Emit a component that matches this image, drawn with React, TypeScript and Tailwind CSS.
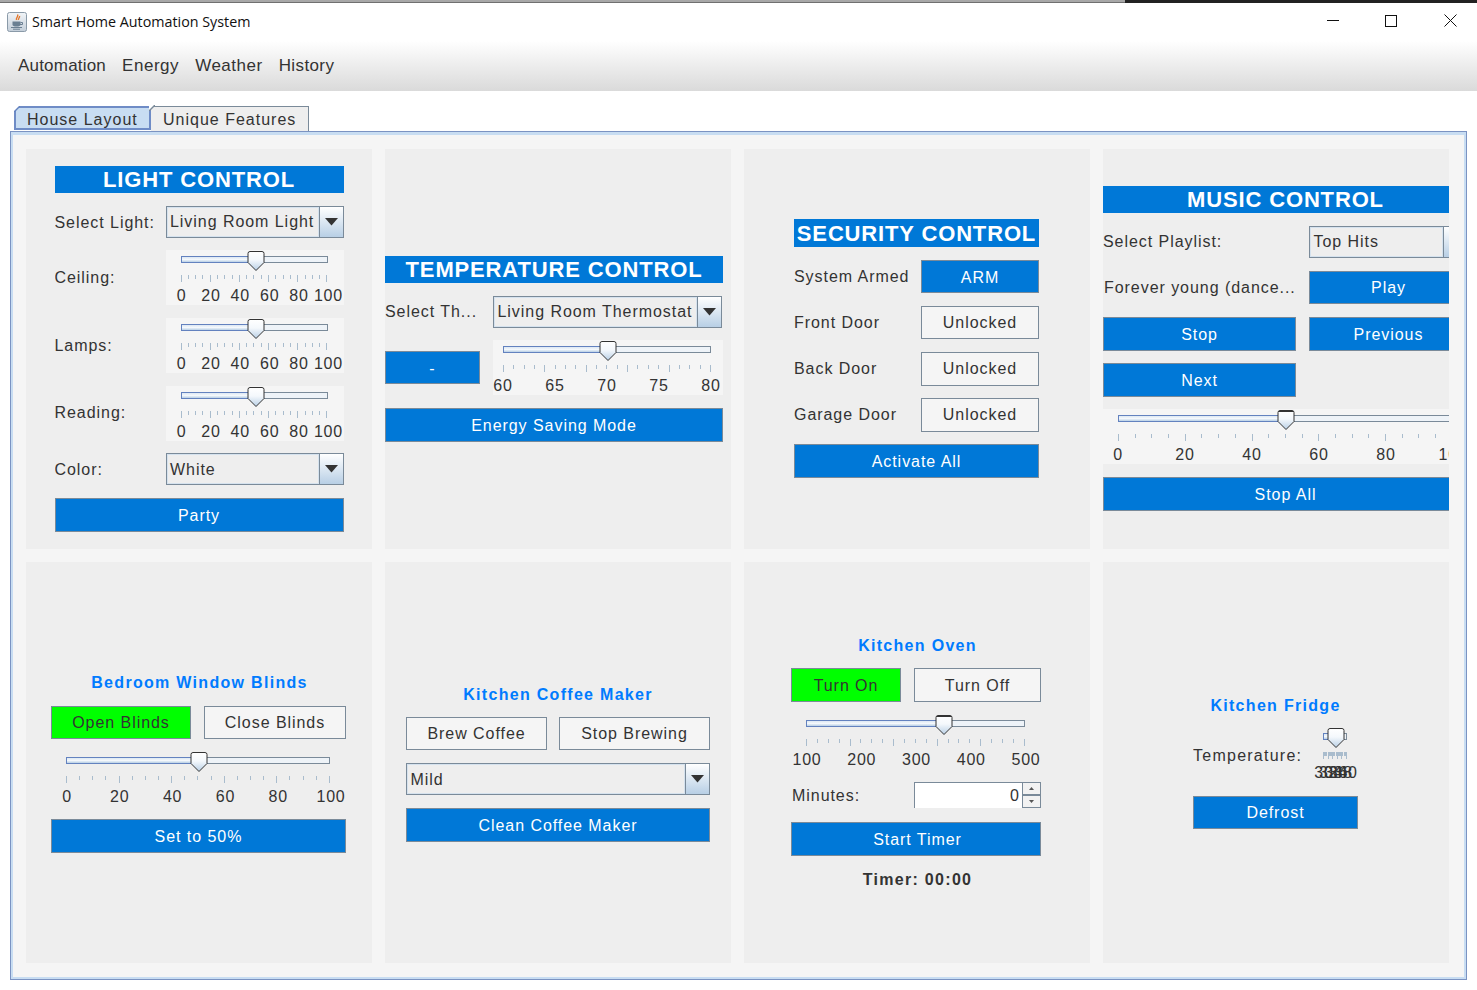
import React from "react";

const font = { fontFamily: '"Liberation Sans", Arial, sans-serif' };

function Blue({ children, className = "" }: { children: React.ReactNode; className?: string }) {
  return (
    <div className={"flex items-center justify-center pt-[2px] bg-[#0078d7] border border-[#7a8a99] text-white text-[16px] tracking-[0.95px] whitespace-nowrap " + className}>
      {children}
    </div>
  );
}

function Plain({ children, className = "" }: { children: React.ReactNode; className?: string }) {
  return (
    <div className={"flex items-center justify-center pt-px border border-[#7a8a99] text-[#333333] text-[16px] tracking-[0.95px] whitespace-nowrap " + className}>
      {children}
    </div>
  );
}

function Header({ children, className = "" }: { children: React.ReactNode; className?: string }) {
  return (
    <div className={"flex items-center justify-center bg-[#0078d7] text-white font-bold text-[22px] tracking-[0.85px] whitespace-nowrap " + className}>
      {children}
    </div>
  );
}

function SubTitle({ children, className = "" }: { children: React.ReactNode; className?: string }) {
  return <div className={"h-[21px] flex items-center justify-center text-[#007bff] font-bold text-[16px] tracking-[1.3px] whitespace-nowrap " + className}>{children}</div>;
}

function Combo({ label, className = "", textClass = "" }: { label: string; className?: string; textClass?: string }) {
  return (
    <div className={"h-[32px] flex border border-[#7a8a99] bg-[#eeeeee] shrink-0 " + className}>
      <div className={"flex-1 min-w-0 flex items-center pl-[2.5px] border border-[#d5e2ee] text-[#333333] text-[16px] tracking-[0.95px] whitespace-nowrap overflow-hidden " + textClass}>{label}</div>
      <div className="w-[24px] shrink-0 flex items-center justify-center border-l border-[#7a8a99] bg-gradient-to-b from-white to-[#b8cfe5]">
        <svg width="13" height="8" viewBox="0 0 13 8">
          <path d="M0 0H13L6.5 7.5Z" fill="#333333" />
        </svg>
      </div>
    </div>
  );
}

function Thumb({ left, heavy }: { left: number; heavy?: boolean }) {
  return (
    <div className="absolute top-[-6px] -translate-x-1/2 w-[19px] h-[21px]" style={{ left: left + "%" }}>
      <svg width="19" height="21" viewBox="0 0 19 21">
        <defs>
          <linearGradient id="thumbfill" x1="0" y1="0" x2="0" y2="1">
            <stop offset="0" stopColor="#ffffff" />
            <stop offset="0.45" stopColor="#f4f8fc" />
            <stop offset="1" stopColor="#b8cfe5" />
          </linearGradient>
        </defs>
        <path d="M1.5 2.5Q1.5 .5 3.5 .5H15.5Q17.5 .5 17.5 2.5V11.5L9.5 19.5L1.5 11.5Z" fill="url(#thumbfill)" stroke="#333333" strokeWidth="1" />
        {heavy && <path d="M2 1.5H17" stroke="#333333" strokeWidth="1" />}
      </svg>
    </div>
  );
}

function Slider({
  labels,
  value,
  className = "",
  inset = "",
  labelClass = "translate-x-px",
  heavy = false,
}: {
  labels: string[];
  value: number;
  className?: string;
  inset?: string;
  labelClass?: string;
  heavy?: boolean;
}) {
  const ticks = Array.from({ length: 21 }, (_, i) => i);
  return (
    <div className={"h-[55px] shrink-0 pt-[6px] " + className}>
      <div className={inset}>
        <div className="relative h-[7px] flex border border-[#7a8a99] bg-[#eef3f8]">
          <div className="h-full bg-gradient-to-b from-[#dde8f3] via-[#f4f8fc] to-[#b8cfe5] outline outline-1 outline-[#6382bf]" style={{ width: value + "%" }} />
          <Thumb left={value} heavy={heavy} />
        </div>
        <div className="mt-[12px] h-[8px] flex justify-between items-start">
          {ticks.map((i) => (
            <div key={i} className={i % 4 === 0 ? "w-px h-[7px] bg-[#a9bccd]" : "w-px h-[4px] bg-[#a9bccd]"} />
          ))}
        </div>
        <div className={"mt-[3px] h-[19px] flex justify-between text-[16px] text-[#333333] tracking-[0.8px] leading-[19px] " + labelClass}>
          {labels.map((l, i) => (
            <div key={i} className="w-0 flex justify-center whitespace-nowrap">{l}</div>
          ))}
        </div>
      </div>
    </div>
  );
}

function Label({ children, className = "" }: { children: React.ReactNode; className?: string }) {
  return <div className={"text-[16px] text-[#333333] tracking-[0.95px] whitespace-nowrap overflow-hidden " + className}>{children}</div>;
}

function Panel({ children, className = "" }: { children: React.ReactNode; className?: string }) {
  return <div className={"bg-[#eeeeee] flex flex-col justify-center overflow-hidden " + className}>{children}</div>;
}

const pct = ["0", "20", "40", "60", "80", "100"];

function LightControl() {
  const Row = ({ name }: { name: string }) => (
    <div className="grid grid-cols-[111px_178px] items-center">
      <Label>{name}</Label>
      <Slider labels={pct} value={51.5} className="bg-[#f5f5f5]" inset="ml-[15px] mr-[16px]" />
    </div>
  );
  return (
    <Panel className="items-center">
      <div className="w-[289px] flex flex-col gap-[12.67px]">
        <Header className="h-[27px]">LIGHT CONTROL</Header>
        <div className="grid grid-cols-[111px_178px] items-center">
          <Label className="pt-[2px]">Select Light:</Label>
          <Combo label="Living Room Light" />
        </div>
        <Row name="Ceiling:" />
        <Row name="Lamps:" />
        <Row name="Reading:" />
        <div className="grid grid-cols-[111px_178px] items-center">
          <Label className="pt-[2px]">Color:</Label>
          <Combo label="White" textClass="pt-[2px]" />
        </div>
        <Blue className="h-[34px]">Party</Blue>
      </div>
    </Panel>
  );
}

function TempControl() {
  return (
    <Panel>
      <div className="w-[338px] flex flex-col gap-[12.67px]">
        <Header className="h-[27px]">TEMPERATURE CONTROL</Header>
        <div className="grid grid-cols-[108px_230px] items-center">
          <Label>Select Th...</Label>
          <Combo label="Living Room Thermostat" className="w-[229px]" />
        </div>
        <div className="grid grid-cols-[95px_230px] gap-x-[13px] items-center">
          <Blue className="h-[33px]">-</Blue>
          <Slider labels={["60", "65", "70", "75", "80"]} value={50.5} className="bg-[#f5f5f5]" inset="ml-[10px] mr-[12px]" labelClass="" />
        </div>
        <Blue className="h-[34px]">Energy Saving Mode</Blue>
      </div>
    </Panel>
  );
}

function SecurityControl() {
  const Row = ({ name, state, blue }: { name: string; state: string; blue?: boolean }) => (
    <div className="grid grid-cols-[127px_118px] items-center">
      <Label className="pt-px">{name}</Label>
      {blue ? <Blue className="h-[33.5px]">{state}</Blue> : <Plain className="h-[33.5px] bg-[#f5f5f5]">{state}</Plain>}
    </div>
  );
  return (
    <Panel className="items-center pr-px pb-px">
      <div className="w-[245px] flex flex-col gap-[12.6px]">
        <Header className="h-[28px]">SECURITY CONTROL</Header>
        <Row name="System Armed" state="ARM" blue />
        <Row name="Front Door" state="Unlocked" />
        <Row name="Back Door" state="Unlocked" />
        <Row name="Garage Door" state="Unlocked" />
        <Blue className="h-[33.5px]">Activate All</Blue>
      </div>
    </Panel>
  );
}

function MusicControl() {
  return (
    <Panel className="pb-px">
      <div className="w-[365px] flex flex-col gap-[13px]">
        <Header className="h-[27px]">MUSIC CONTROL</Header>
        <div className="grid grid-cols-[193px_159px] gap-x-[13px] items-center">
          <Label>Select Playlist:</Label>
          <Combo label="Top Hits" className="w-[159px]" />
        </div>
        <div className="grid grid-cols-[193px_159px] gap-x-[13px] items-center">
          <Label className="pl-px">Forever young (dance...</Label>
          <Blue className="h-[33px] !pt-px">Play</Blue>
        </div>
        <div className="grid grid-cols-[193px_159px] gap-x-[13px] items-center">
          <Blue className="h-[34px]">Stop</Blue>
          <Blue className="h-[34px]">Previous</Blue>
        </div>
        <div className="grid grid-cols-[193px_159px] gap-x-[13px] items-center -mt-px">
          <Blue className="h-[34px]">Next</Blue>
        </div>
        <Slider labels={pct} value={50} className="bg-[#f5f5f5] -mt-px" inset="ml-[15px] w-[335px]" labelClass="" heavy />
        <Blue className="h-[34px]">Stop All</Blue>
      </div>
    </Panel>
  );
}

function Blinds() {
  return (
    <Panel className="items-center pr-px">
      <div className="w-[295px] flex flex-col gap-[12.67px]">
        <SubTitle className="pl-[2px]">Bedroom Window Blinds</SubTitle>
        <div className="flex gap-[13px]">
          <Plain className="w-[140px] h-[33px] bg-[#00ff00]">Open Blinds</Plain>
          <Plain className="w-[142px] h-[33px] bg-[#f5f5f5]">Close Blinds</Plain>
        </div>
        <Slider labels={pct} value={50.5} inset="ml-[15px] mr-[16px]" />
        <Blue className="h-[34px]">Set to 50%</Blue>
      </div>
    </Panel>
  );
}

function Coffee() {
  return (
    <Panel className="items-center">
      <div className="w-[304px] flex flex-col gap-[13px]">
        <SubTitle className="pt-[2px]">Kitchen Coffee Maker</SubTitle>
        <div className="flex gap-[12px]">
          <Plain className="w-[141px] h-[33px] bg-[#f5f5f5]">Brew Coffee</Plain>
          <Plain className="w-[151px] h-[33px] bg-[#f5f5f5]">Stop Brewing</Plain>
        </div>
        <Combo label="Mild" textClass="pt-[2px]" />
        <Blue className="h-[34px]">Clean Coffee Maker</Blue>
      </div>
    </Panel>
  );
}

function Oven() {
  return (
    <Panel className="items-center pr-[2px] pb-px">
      <div className="w-[250px] flex flex-col gap-[13px]">
        <SubTitle className="pl-[3px] pt-[2px]">Kitchen Oven</SubTitle>
        <div className="flex gap-[13px]">
          <Plain className="w-[110px] h-[34px] bg-[#00ff00]">Turn On</Plain>
          <Plain className="w-[127px] h-[34px] bg-[#f5f5f5]">Turn Off</Plain>
        </div>
        <Slider labels={["100", "200", "300", "400", "500"]} value={63} className="-mt-px" inset="ml-[15px] mr-[16px]" heavy />
        <div className="grid grid-cols-[123px_127px] items-center h-[26px]">
          <Label className="pl-px pt-[2px]">Minutes:</Label>
          <div className="flex h-[26px]">
            <div className="w-[108px] bg-white border-l border-t border-[#7a8a99] border-b-[#b8c4d0] flex items-center justify-end pr-[3px] text-[16px] text-[#333333]">0</div>
            <div className="w-[19px] flex flex-col">
              <div className="h-[13px] flex items-center justify-center border border-[#7a8a99] bg-[#f2f2f2]">
                <svg width="5" height="3" viewBox="0 0 5 3"><path d="M0 3H5L2.5 0Z" fill="#555555" /></svg>
              </div>
              <div className="h-[13px] flex items-center justify-center border border-[#7a8a99] bg-[#f2f2f2]">
                <svg width="5" height="3" viewBox="0 0 5 3"><path d="M0 0H5L2.5 3Z" fill="#555555" /></svg>
              </div>
            </div>
          </div>
        </div>
        <Blue className="h-[34px] mt-px pl-[3px]">Start Timer</Blue>
        <div className="h-[21px] flex items-center justify-center pl-[3px] font-bold text-[16px] text-[#333333] tracking-[1.3px]">Timer: 00:00</div>
      </div>
    </Panel>
  );
}

function Fridge() {
  return (
    <Panel className="items-center pr-px pb-[2px]">
      <div className="w-[165px] flex flex-col gap-[12.67px]">
        <SubTitle className="pt-[2px]">Kitchen Fridge</SubTitle>
        <div className="grid grid-cols-[121px_44px] items-center -mt-px">
          <Label className="pt-[2px]"><span className="tracking-[1.25px]">Temperature:</span></Label>
          <Slider labels={["30", "32", "34", "36", "38", "40"]} value={56} inset="ml-[9px] mr-[11px]" />
        </div>
        <Blue className="h-[33px] mt-px">Defrost</Blue>
      </div>
    </Panel>
  );
}

function JavaIcon() {
  return (
    <svg width="20" height="20" viewBox="0 0 20 20" className="mt-[9px] ml-[7px] shrink-0">
      <defs>
        <linearGradient id="jb" x1="0" y1="0" x2="0" y2="1">
          <stop offset="0" stopColor="#f2f5f8" />
          <stop offset="1" stopColor="#c3ced9" />
        </linearGradient>
      </defs>
      <rect x=".5" y=".5" width="19" height="19" rx="2" fill="url(#jb)" stroke="#8a9aa8" />
      <path d="M10.5 2.5C12 4.5 8.5 5.5 9.5 8M12.5 4C13 5.5 11 6.5 11.5 8" stroke="#e4762a" strokeWidth="1.4" fill="none" />
      <path d="M5.5 9.5H13.5V12.5C13.5 14 12 14.5 9.5 14.5C7 14.5 5.5 14 5.5 12.5Z" fill="#6a7f92" />
      <path d="M13.5 10.5H15.5V12.5H13" stroke="#6a7f92" strokeWidth="1" fill="none" />
      <path d="M4 15.5H15M6 17.2H13" stroke="#6a7f92" strokeWidth="1" />
    </svg>
  );
}

function TitleBar() {
  return (
    <div className="h-[38px] shrink-0 flex bg-white relative">
      <JavaIcon />
      <div className="ml-[5px] h-[37px] flex items-center text-[14.3px] text-[#111111]" style={{ fontFamily: '"Open Sans", sans-serif' }}>
        Smart Home Automation System
      </div>
      <div className="ml-auto flex">
        <div className="w-[50px] h-full flex items-center justify-center">
          <svg width="12" height="12" viewBox="0 0 12 12" className="-mt-[3px]"><path d="M0 5.5H12" stroke="#111111" /></svg>
        </div>
        <div className="w-[66px] h-full flex items-center justify-center">
          <svg width="12" height="12" viewBox="0 0 12 12" className="-mt-[3px]"><rect x=".5" y=".5" width="11" height="11" fill="none" stroke="#111111" /></svg>
        </div>
        <div className="w-[53px] h-full flex items-center justify-center">
          <svg width="13" height="13" viewBox="0 0 13 13" className="-mt-[3px]"><path d="M.5 .5L12.5 12.5M12.5 .5L.5 12.5" stroke="#111111" /></svg>
        </div>
      </div>
    </div>
  );
}

function MenuBar() {
  return (
    <div className="h-[50px] shrink-0 flex items-center pl-[18px] gap-[16px] bg-gradient-to-b from-white to-[#dadada] text-[17px] text-[#333333]">
      <span className="tracking-[0.2px]">Automation</span>
      <span className="tracking-[0.55px]">Energy</span>
      <span className="tracking-[0.5px]">Weather</span>
      <span className="tracking-[0.4px]">History</span>
    </div>
  );
}

function Corner({ color }: { color: string }) {
  return (
    <svg width="6" height="6" viewBox="0 0 6 6" className="absolute -left-[2px] -top-[2px]">
      <path d="M0 0H6L0 6Z" fill="#ffffff" />
      <path d="M0 6L6 0" stroke={color} strokeWidth="1.4" />
    </svg>
  );
}

function Tabs() {
  return (
    <div className="mt-[15px] ml-[14px] flex h-[25px] shrink-0 text-[16px] text-[#333333] tracking-[1px]">
      <div className="relative w-[137px] h-[24px] flex items-center pl-[11px] pt-[3px] bg-[#c8ddf2] border-2 border-[#6f8cc6]">
        House Layout
        <Corner color="#6382bf" />
      </div>
      <div className="relative w-[158px] h-[25px] flex items-center pl-[12px] pt-[2px] bg-[#eeeeee] border-t border-r border-[#7a8a99]">
        Unique Features
        <Corner color="#7a8a99" />
      </div>
    </div>
  );
}

export default function App() {
  return (
    <div className="w-[1477px] h-[990px] overflow-hidden bg-white flex flex-col" style={font}>
      <div className="h-[3px] shrink-0 flex">
        <div className="w-[1125px] bg-[#a8a8a8] border-b border-[#707070]" />
        <div className="flex-1 bg-[#222222]" />
      </div>
      <TitleBar />
      <MenuBar />
      <Tabs />
      <div className="mx-[10px] h-[849px] border border-[#7b93c2] shrink-0">
        <div className="h-full border-x-2 border-b-2 border-t-[3px] border-x-[#c8ddf2] border-t-[#c8ddf2] border-b-[#c8ddf2] bg-[#f5f5f5] pl-[13px] pt-[14px]">
          <div className="grid grid-cols-[346px_346px_346px_346px] grid-rows-[400px_401px] gap-[13px]">
            <LightControl />
            <TempControl />
            <SecurityControl />
            <MusicControl />
            <Blinds />
            <Coffee />
            <Oven />
            <Fridge />
          </div>
        </div>
      </div>
    </div>
  );
}
